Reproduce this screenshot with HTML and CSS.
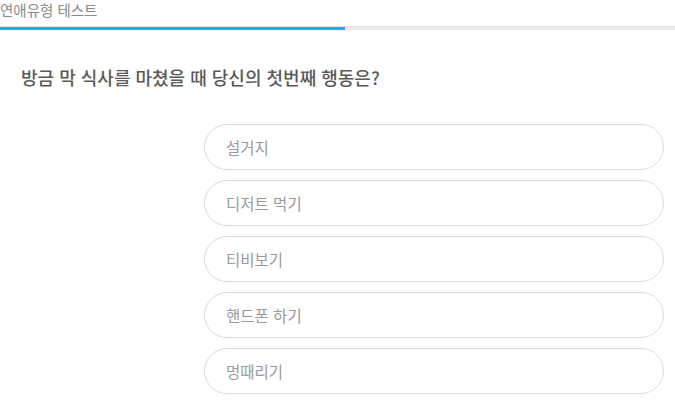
FILE: index.html
```html
<!DOCTYPE html>
<html lang="ko">
<head>
<meta charset="utf-8">
<title>연애유형 테스트</title>
<link rel="stylesheet" href="styles.css">
</head>
<body>
<header class="header">
  <div class="title">연애유형 테스트</div>
</header>
<div class="progress"><div class="progress-fill" style="width: 345px"></div></div>
<main class="quiz">
  <h1 class="question">방금 막 식사를 마쳤을 때 당신의 첫번째 행동은?</h1>
  <ul class="options">
    <li class="option">설거지</li>
    <li class="option">디저트 먹기</li>
    <li class="option">티비보기</li>
    <li class="option">핸드폰 하기</li>
    <li class="option">멍때리기</li>
  </ul>
</main>
</body>
</html>
```
FILE: styles.css
```css
html, body {
  margin: 0;
  padding: 0;
  background: #fff;
  font-family: "Noto Sans CJK KR", "Noto Sans", sans-serif;
}
.header {
  height: 26px;
  box-sizing: border-box;
}
.title {
  font-size: 14.5px;
  line-height: 19px;
  color: #8a8a8a;
}
.progress {
  height: 4px;
  background: #ebebeb;
  border-top: 1px solid #e2e2e2;
  box-sizing: border-box;
}
.progress-fill {
  height: 3px;
  background: #1ab0ee;
}
.question {
  margin: 35px 0 0 21px;
  font-size: 18px;
  line-height: 24px;
  font-weight: 500;
  color: #595959;
}
.options {
  list-style: none;
  margin: 35px 0 0 204px;
  padding: 0;
  width: 460px;
  display: flex;
  flex-direction: column;
  gap: 10px;
}
.option {
  height: 46px;
  box-sizing: border-box;
  border: 1px solid #dcdcdc;
  border-radius: 23px;
  padding-left: 21px;
  display: flex;
  align-items: center;
  font-size: 15.5px;
  color: #999;
}
```
